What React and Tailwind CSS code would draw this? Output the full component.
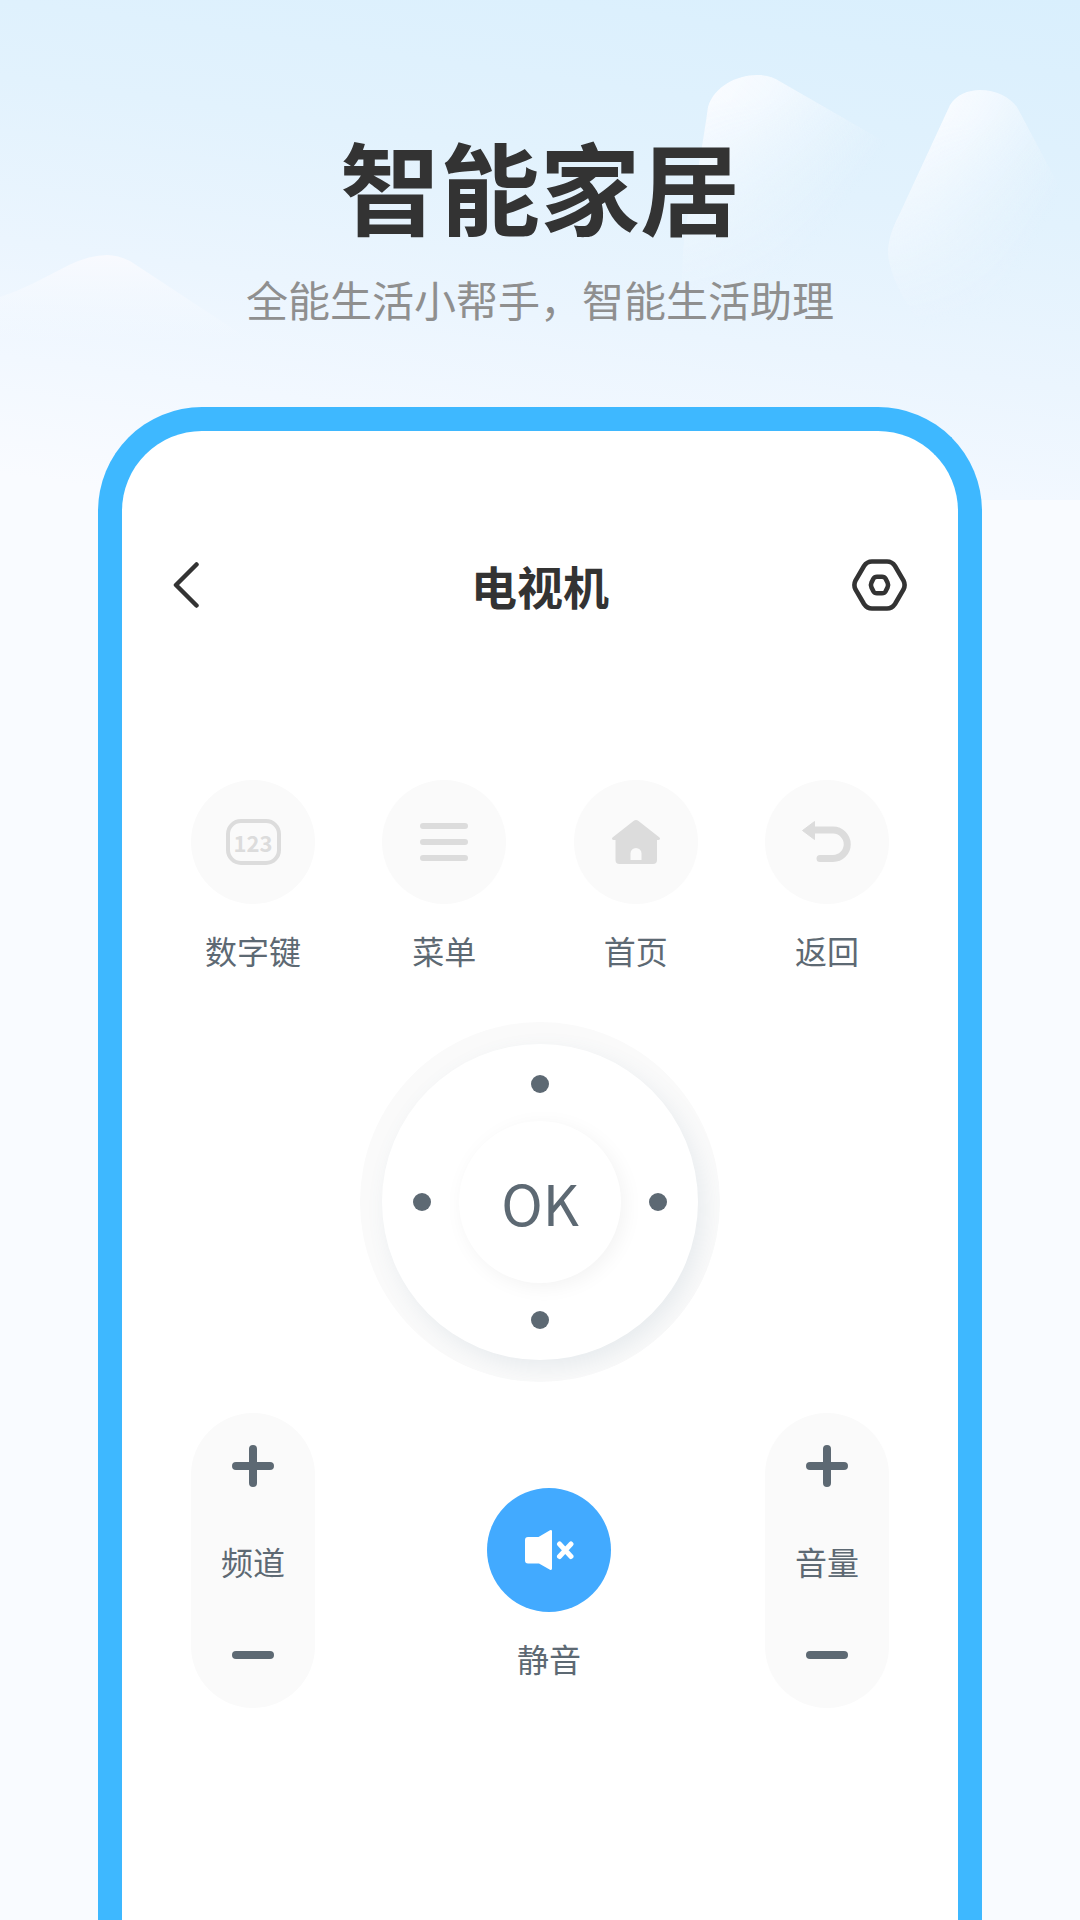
import React from 'react';

function Backdrop() {
  return (
    <div className="absolute inset-x-0 top-0 h-[500px] overflow-hidden bg-linear-[188deg,#d9effd_0%,#e2f2fd_35%,#ebf5fe_60%,#f2f8ff_78%,#f9fbff_96%]">
      <svg viewBox="0 0 1080 500" className="w-full h-full" preserveAspectRatio="xMidYMin slice" aria-hidden="true">
        <defs>
          <linearGradient id="peakA" gradientUnits="userSpaceOnUse" x1="700" y1="100" x2="850" y2="200">
            <stop offset="0" stopColor="#fbfcff" stopOpacity="0.95" />
            <stop offset="0.3" stopColor="#f8fbff" stopOpacity="0.8" />
            <stop offset="1" stopColor="#f6faff" stopOpacity="0" />
          </linearGradient>
          <linearGradient id="peakB" gradientUnits="userSpaceOnUse" x1="910" y1="150" x2="1050" y2="215">
            <stop offset="0" stopColor="#fbfcff" stopOpacity="0.95" />
            <stop offset="0.3" stopColor="#f8fbff" stopOpacity="0.8" />
            <stop offset="1" stopColor="#f6faff" stopOpacity="0" />
          </linearGradient>
          <linearGradient id="fade" x1="0" y1="0" x2="0" y2="1">
            <stop offset="0.15" stopColor="#fff" />
            <stop offset="0.65" stopColor="#777" />
            <stop offset="1" stopColor="#000" />
          </linearGradient>
          <mask id="fadeA" maskUnits="userSpaceOnUse" x="660" y="60" width="320" height="250">
            <rect x="660" y="60" width="320" height="250" fill="url(#fade)" />
          </mask>
          <mask id="fadeB" maskUnits="userSpaceOnUse" x="860" y="80" width="220" height="250">
            <rect x="860" y="80" width="220" height="250" fill="url(#fade)" />
          </mask>
          <linearGradient id="peakC" x1="0" y1="0" x2="0" y2="1">
            <stop offset="0" stopColor="#f9fafe" stopOpacity="0.95" />
            <stop offset="1" stopColor="#f6faff" stopOpacity="0" />
          </linearGradient>
        </defs>
        <path d="M708 107C714 87 736 75 757 75C767 75 773 77 781 82L960 185L900 330H684Q678 250 690 207Q699 170 708 107Z" fill="url(#peakA)" mask="url(#fadeA)" />
        <path d="M950 105C956 95 968 90 980 90C996 90 1010 97 1017 107L1080 225V330H922Q912 312 903 297Q884 262 889 242Q891 230 900 213Z" fill="url(#peakB)" mask="url(#fadeB)" />
        <path d="M0 297Q18 291 34 283L69 265Q90 255 107 255Q118 255 130 261L250 340H0Z" fill="url(#peakC)" />
      </svg>
    </div>
  );
}

const icons = {
  digits: (
    <span className="w-[55px] h-[46px] flex items-center justify-center rounded-[15px] border-4 border-[#dcdcdc] text-[22px] leading-none font-bold text-[#dcdcdc]">
      123
    </span>
  ),
  menu: (
    <svg width="48" height="38" viewBox="0 0 48 38" stroke="#dcdcdc" strokeWidth="6" strokeLinecap="round" aria-hidden="true">
      <path d="M3 3H45M3 19H45M3 35H45" />
    </svg>
  ),
  home: (
    <svg width="50" height="44" viewBox="0 0 50 44" fill="#dcdcdc" aria-hidden="true">
      <path d="M22.5 1Q25 -0.8 27.5 1L48.5 17.5Q50 19.5 47.5 20H46V40Q46 44 42 44H8.5Q4.500 44 4.500 40V20H2.500Q0 19.500 1.500 17.500ZM19.500 40H30.500V33.500A5.500 5.500 0 0 0 19.500 33.500Z" fillRule="evenodd" />
    </svg>
  ),
  back: (
    <svg width="49" height="42" viewBox="0 0 49 42" aria-hidden="true">
      <path d="M12.500 0.500V18.500L0.500 9.500Z" fill="#dcdcdc" stroke="#dcdcdc" strokeLinejoin="round" />
      <path d="M12 9H31A14.250 14.250 0 0 1 31 37.500H18" fill="none" stroke="#dcdcdc" strokeWidth="7" strokeLinecap="round" />
    </svg>
  ),
};

const shortcuts = [
  { id: 'digits', label: '数字键' },
  { id: 'menu', label: '菜单' },
  { id: 'home', label: '首页' },
  { id: 'back', label: '返回' },
];

function Shortcut({ icon, label }) {
  return (
    <button type="button" className="w-[124px] flex flex-col items-center gap-[26px]">
      <span className="w-[124px] h-[124px] rounded-full bg-[#fafafa] flex items-center justify-center">{icon}</span>
      <span className="text-[32px] leading-[40px] whitespace-nowrap">{label}</span>
    </button>
  );
}

function Arrow({ label, className }) {
  return (
    <button type="button" aria-label={label} className={`flex items-center justify-center ${className}`}>
      <span className="w-[18px] h-[18px] rounded-full bg-[#5d6973]" />
    </button>
  );
}

function Dial() {
  return (
    <div className="w-[360px] h-[360px] rounded-full bg-[#fafafa] overflow-hidden flex items-center justify-center">
      <div className="w-[316px] h-[316px] p-[3px] rounded-full bg-white shadow-[6px_8px_22px_rgba(80,120,145,0.11)] grid grid-cols-[1fr_162px_1fr] grid-rows-[1fr_162px_1fr]">
        <Arrow label="上" className="col-start-2" />
        <Arrow label="左" className="col-start-1 row-start-2" />
        <button type="button" className="col-start-2 row-start-2 rounded-full bg-white shadow-[4px_4px_20px_rgba(0,0,0,0.05)] text-[56px] leading-none">
          OK
        </button>
        <Arrow label="右" className="col-start-3 row-start-2" />
        <Arrow label="下" className="col-start-2 row-start-3" />
      </div>
    </div>
  );
}

function Stepper({ label }) {
  return (
    <div role="group" aria-label={label} className="w-[124px] h-[295px] py-[32px] rounded-full bg-[#fafafa] flex flex-col items-center justify-between">
      <button type="button" aria-label={`${label}加`}>
        <svg width="42" height="42" viewBox="0 0 42 42" stroke="#5d6973" strokeWidth="8" strokeLinecap="round" className="block">
          <path d="M4 21H38M21 4V38" />
        </svg>
      </button>
      <span className="text-[32px] leading-[40px]">{label}</span>
      <button type="button" aria-label={`${label}减`}>
        <svg width="42" height="42" viewBox="0 0 42 42" stroke="#5d6973" strokeWidth="8" strokeLinecap="round" className="block">
          <path d="M4 21H38" />
        </svg>
      </button>
    </div>
  );
}

function MuteButton() {
  return (
    <button type="button" className="w-[124px] flex flex-col items-center gap-[26px]">
      <span className="w-[124px] h-[124px] rounded-full bg-[#42aaff] flex items-center justify-center">
        <svg width="49" height="40" viewBox="0 0 49 40" aria-hidden="true">
          <path d="M3 7H13.500L25 0.300Q27 -0.500 27 1.500V38.500Q27 40.500 25 39.700L14 33.500H3Q0 33.500 0 30.500V10Q0 7 3 7Z" fill="#fff" />
          <path d="M34.500 14L46 26.500M46 14L34.500 26.500" stroke="#fff" strokeWidth="5" strokeLinecap="round" />
        </svg>
      </span>
      <span className="text-[32px] leading-[40px]">静音</span>
    </button>
  );
}

export default function App() {
  return (
    <div className="relative min-h-screen flex flex-col bg-[#f9fbff] font-['Noto_Sans_CJK_SC',sans-serif]">
      <Backdrop />
      <header className="relative pt-[125px] text-center">
        <h1 className="text-[100px] leading-[120px] font-bold text-[#333333]">智能家居</h1>
        <p className="mt-[30px] text-[42px] leading-[48px] text-[#8f8f8f]">全能生活小帮手，智能生活助理</p>
      </header>

      <main className="relative flex-1 mt-[84px] mx-[98px] border-x-24 border-t-24 border-[#3eb8ff] rounded-t-[104px] bg-white text-[#5d6973]">
        <div className="pt-[126px] px-[51px] flex items-center justify-between text-[#333333]">
          <button type="button" aria-label="后退" className="w-[55px]">
            <svg width="26" height="46" viewBox="0 0 26 46" fill="none" stroke="currentColor" strokeWidth="4.5" strokeLinecap="round" strokeLinejoin="round">
              <path d="M23.500 2.500L3 23L23.500 43.500" />
            </svg>
          </button>
          <h2 className="text-[46px] leading-[56px] font-bold">电视机</h2>
          <button type="button" aria-label="设置">
            <svg width="55" height="52" viewBox="0 0 55 52" fill="none" stroke="currentColor" strokeWidth="4.6">
              <path d="M20 2.500H35Q40 2.500 43 7L51.500 21.500Q53.700 26 51.500 30.500L43 45Q40 49.500 35 49.500H20Q15 49.500 12 45L3.500 30.500Q1.300 26 3.500 21.500L12 7Q15 2.500 20 2.500Z" />
              <path d="M25 17.700H30Q32.500 17.700 33.500 19.500L35.500 23.500Q36.700 26 35.500 28.500L33.500 32.500Q32.500 34.300 30 34.300H25Q22.500 34.300 21.500 32.500L19.500 28.500Q18.300 26 19.500 23.500L21.500 19.500Q22.500 17.700 25 17.700Z" />
            </svg>
          </button>
        </div>

        <div className="mt-[167px] px-[69px] flex justify-between">
          {shortcuts.map((item) => (
            <Shortcut key={item.id} icon={icons[item.id]} label={item.label} />
          ))}
        </div>

        <div className="mt-[52px] flex justify-center">
          <Dial />
        </div>

        <div className="mt-[31px] px-[69px] flex items-start justify-between">
          <div className="flex items-end gap-[172px]">
            <Stepper label="频道" />
            <div className="pb-[30px]">
              <MuteButton />
            </div>
          </div>
          <Stepper label="音量" />
        </div>
      </main>
    </div>
  );
}
